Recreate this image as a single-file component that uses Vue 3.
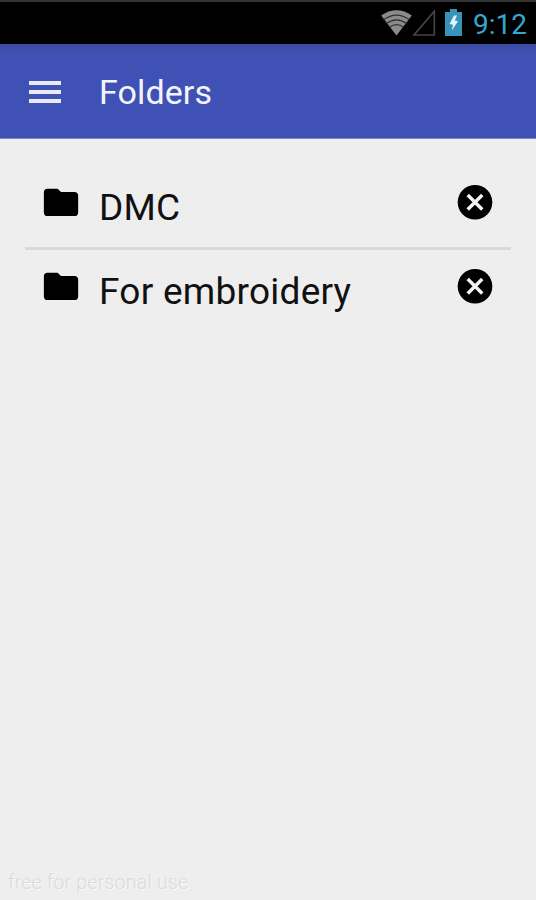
<template>
  <div class="screen">
    <div class="status-bar">
      <svg class="status-bar__wifi" width="33" height="26" viewBox="0 0 34 28">
        <path d="M17 27.500 L0.500 6 Q17 -5.500 33.500 6 Z" fill="#8b8b8b" />
        <g fill="none" stroke="#303030" stroke-width="1.300">
          <path d="M3 10.600 Q17 0.500 31 10.600" />
          <path d="M6 14.600 Q17 6.500 28 14.600" />
          <path d="M9.500 18.500 Q17 13 24.500 18.500" />
        </g>
      </svg>
      <svg class="status-bar__signal" width="24" height="28" viewBox="0 0 24 28">
        <path d="M22.300 2.200 V26 H2 Z" fill="none" stroke="#444" stroke-width="1.700" />
      </svg>
      <svg class="status-bar__battery" width="17" height="27" viewBox="0 0 17 27">
        <path d="M5 0 H12 V3 H17 V27 H0 V3 H5 Z" fill="#3794b8" />
        <path d="M9 6.500 L4.500 15 L8 15.800 L6.800 21.500 L13 12.300 L9.800 11.500 L12 6.500 Z" fill="#e4f4f8" />
      </svg>
      <span class="status-bar__time">9:12</span>
    </div>

    <header class="app-bar">
      <button class="app-bar__menu" aria-label="Menu">
        <span></span>
        <span></span>
        <span></span>
      </button>
      <h1 class="app-bar__title">Folders</h1>
    </header>

    <ul class="folder-list">
      <li v-for="folder in folders" :key="folder.id" class="folder">
        <svg class="folder__icon" width="42" height="42" viewBox="0 0 24.500 24">
          <path d="M10.250 4.200H4.250c-1.100 0-1.990.9-1.990 2v12c0 1.100.9 2 2 2h16c1.100 0 2-.9 2-2v-10c0-1.100-.9-2-2-2h-8l-2-2z" />
        </svg>
        <span class="folder__name">{{ folder.name }}</span>
        <button class="folder__remove" aria-label="Remove" @click="removeFolder(folder.id)">
          <svg width="42" height="42" viewBox="0 0 24.500 24.500">
            <circle cx="12.250" cy="12.400" r="10.100" />
            <path d="M8 8.150 L16.500 16.650 M16.500 8.150 L8 16.650" stroke="#f4f4f4" stroke-width="2" />
          </svg>
        </button>
      </li>
    </ul>

    <footer class="watermark">free for personal use</footer>
  </div>
</template>

<script setup>
import { ref } from "vue"

const folders = ref([
    { id: 1, name: "DMC" },
    { id: 2, name: "For embroidery" },
])

function removeFolder(id) {
    folders.value = folders.value.filter(item => item.id !== id)
}
</script>

<style>
body {
    margin: 0;
    background: #eee;
}
</style>

<style scoped>
.screen {
    display: flex;
    flex-direction: column;
    height: 900px;
    background: #eee;
    font-family: Roboto, sans-serif;
    overflow: hidden;
}

button {
    padding: 0;
    border: 0;
    background: none;
}

svg {
    display: block;
}

/* Status bar */
.status-bar {
    display: flex;
    flex: none;
    justify-content: flex-end;
    align-items: center;
    box-sizing: border-box;
    height: 44px;
    padding-right: 9px;
    background: #000;
    border-top: 2px solid #333;
}

.status-bar__signal {
    margin-left: -1px;
}

.status-bar__battery {
    margin: 0 0 2px 9px;
}

.status-bar__time {
    margin: 3px 0 0 11px;
    color: #35a8d0;
    font-size: 28px;
    line-height: 39px;
}

/* App bar */
.app-bar {
    display: flex;
    flex: none;
    align-items: center;
    box-sizing: border-box;
    height: 95px;
    padding-left: 29px;
    background: linear-gradient(#3c4ba5, #3f51b5 12px);
    border-bottom: 1px solid #7d88c8;
}

.app-bar__menu {
    display: flex;
    flex-direction: column;
    gap: 5px;
    width: 32px;
    margin-top: 1px;
}

.app-bar__menu span {
    height: 4px;
    background: #e8eaf8;
}

.app-bar__title {
    margin: 2px 0 0 38px;
    color: #f4f5fc;
    font-size: 34px;
    font-weight: 400;
    letter-spacing: 0.1px;
    line-height: 40px;
}

/* Folder list */
.folder-list {
    margin: 0;
    padding: 25px 25px 0;
    list-style: none;
}

.folder {
    display: flex;
    align-items: flex-start;
    box-sizing: border-box;
    height: 83px;
    padding: 17px 15px 0;
}

.folder + .folder {
    height: 86px;
    padding-top: 15px;
    border-top: 3px solid #d9d9d9;
}

.folder__name {
    flex: 1;
    margin-left: 17px;
    padding-top: 6px;
    color: #111;
    font-size: 37px;
    font-weight: 400;
    letter-spacing: 0.25px;
    line-height: 42px;
}

/* Watermark */
.watermark {
    margin-top: auto;
    padding: 0 0 6px 8px;
    color: #dadada;
    font-size: 20px;
    font-weight: 300;
    line-height: 24px;
    text-shadow: 1px 1px 0 #f8f8f8;
}
</style>
